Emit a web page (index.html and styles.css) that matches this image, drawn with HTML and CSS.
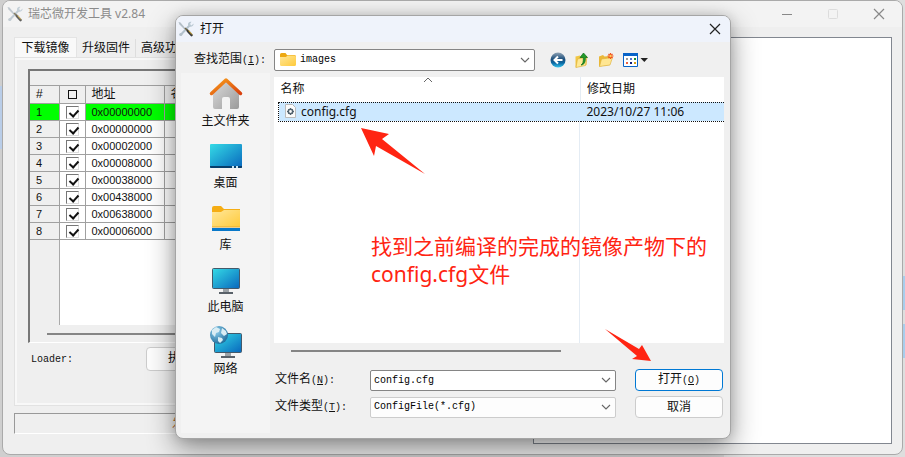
FILE: index.html
```html
<!DOCTYPE html>
<html lang="zh-CN">
<head>
<meta charset="utf-8">
<title>瑞芯微开发工具 v2.84</title>
<link rel="stylesheet" href="styles.css">
</head>
<body>
<svg class="defs" aria-hidden="true">
  <defs>
    <linearGradient id="screen" x1="0" y1="0" x2="1" y2="1"><stop offset="0" stop-color="#35dbe6"/><stop offset="1" stop-color="#0867bd"/></linearGradient>
    <linearGradient id="folder" x1="0" y1="0" x2="1" y2="1"><stop offset="0" stop-color="#ffe79a"/><stop offset="1" stop-color="#ffca3a"/></linearGradient>
    <linearGradient id="roof" x1="0" y1="0" x2="1" y2="1"><stop offset="0" stop-color="#f9a01b"/><stop offset="1" stop-color="#d8400e"/></linearGradient>
    <linearGradient id="wall" x1="0" y1="0" x2="1" y2="1"><stop offset="0" stop-color="#dcdcdc"/><stop offset="1" stop-color="#9b9b9b"/></linearGradient>
    <radialGradient id="globe" cx=".35" cy=".3" r=".8"><stop offset="0" stop-color="#8fd0ee"/><stop offset="1" stop-color="#176494"/></radialGradient>
    <linearGradient id="back" x1="0" y1="0" x2="0" y2="1"><stop offset="0" stop-color="#8fa2b4"/><stop offset=".45" stop-color="#1c4f7c"/><stop offset=".7" stop-color="#0a6aa5"/><stop offset="1" stop-color="#35c4ec"/></linearGradient>
  </defs>
  <symbol id="tools" viewBox="0 0 16 16">
    <path d="M3 13.500 12 4" stroke="#b3c2cd" stroke-width="2"/>
    <path d="M15.500 2.500 13.500 4.500 12 3 13.500.8c-2-.6-4 1-3.500 3.200l1.500 1.700c2.500.5 4.500-1.200 4-3.200Z" fill="#b9c8d2"/>
    <path d="m.5 1 2 .5 5 6-1 1L1.500 3.500Z" fill="#b3bec6"/>
    <path d="m7 7 3 3" stroke="#6b6242" stroke-width="1.600"/>
    <path d="m9.800 9.800 3.700 4.200" stroke="#3a3a38" stroke-width="2.600" stroke-linecap="round"/>
    <path d="m10.500 9.500 3.500 4" stroke="#e4b83c" stroke-width="1"/>
    <circle cx="2.800" cy="13.500" r="1.600" fill="#b4c1ca"/>
  </symbol>
  <symbol id="chevron" viewBox="0 0 10 6"><path d="m1 1 4 4 4-4" fill="none" stroke="#666" stroke-width="1.100"/></symbol>
  <symbol id="folder-icon" viewBox="0 0 16 13"><path d="M0 1.500Q0 0 1.500 0h4L7 2h7.500Q16 2 16 3.500V6H0Z" fill="#eda811"/><path d="M0 4h6l1.500-1.500h7Q16 2.500 16 4v7.500q0 1.500-1.500 1.500h-13Q0 13 0 11.500Z" fill="url(#folder)"/></symbol>
</svg>

<main class="window">
  <header class="titlebar">
    <svg class="app-icon faded"><use href="#tools"/></svg>
    <h1>瑞芯微开发工具 v2.84</h1>
    <div class="caption-buttons">
      <button aria-label="最小化"><svg viewBox="0 0 12 12"><path d="M1 6.500h10" stroke="#888"/></svg></button>
      <button aria-label="最大化" disabled><svg viewBox="0 0 12 12"><rect x="1.500" y="1.500" width="9" height="9" rx="1" fill="none" stroke="#dcdcdc"/></svg></button>
      <button aria-label="关闭"><svg viewBox="0 0 12 12"><path d="m1 1 10 10M11 1 1 11" stroke="#888" stroke-width="1.200"/></svg></button>
    </div>
  </header>
  <div class="content">
    <section class="left">
      <nav class="tabs">
        <button class="tab active">下载镜像</button><button class="tab">升级固件</button><button class="tab">高级功能</button>
      </nav>
      <div class="panel">
        <div class="grid-frame">
          <table class="grid">
            <colgroup><col class="c-num"><col class="c-check"><col class="c-addr"><col></colgroup>
            <thead><tr><th>#</th><th><span class="box"></span></th><th>地址</th><th>名字</th></tr></thead>
            <tbody>
              <tr class="current"><td>1</td><td><input type="checkbox" checked aria-label="1"></td><td>0x00000000</td><td></td></tr>
              <tr><td>2</td><td><input type="checkbox" checked aria-label="2"></td><td>0x00000000</td><td></td></tr>
              <tr><td>3</td><td><input type="checkbox" checked aria-label="3"></td><td>0x00002000</td><td></td></tr>
              <tr><td>4</td><td><input type="checkbox" checked aria-label="4"></td><td>0x00008000</td><td></td></tr>
              <tr><td>5</td><td><input type="checkbox" checked aria-label="5"></td><td>0x00038000</td><td></td></tr>
              <tr><td>6</td><td><input type="checkbox" checked aria-label="6"></td><td>0x00438000</td><td></td></tr>
              <tr><td>7</td><td><input type="checkbox" checked aria-label="7"></td><td>0x00638000</td><td></td></tr>
              <tr><td>8</td><td><input type="checkbox" checked aria-label="8"></td><td>0x00006000</td><td></td></tr>
            </tbody>
          </table>
          <div class="grid-rest"></div>
          <div class="grid-scroll"><i></i></div>
        </div>
        <div class="loader"><span>Loader:</span><button>执行</button></div>
      </div>
      <div class="status">发现一个设备</div>
    </section>
    <section class="log" aria-label="日志"></section>
  </div>
</main>

<div class="dialog" role="dialog" aria-labelledby="dialog-title">
  <header class="dialog-title">
    <svg class="app-icon"><use href="#tools"/></svg>
    <h2 id="dialog-title">打开</h2>
    <button aria-label="关闭"><svg viewBox="0 0 12 12"><path d="m1 1 10 10M11 1 1 11" stroke="#222" stroke-width="1.200"/></svg></button>
  </header>
  <div class="lookup">
    <label for="look-in">查找范围<span>(<u>I</u>):</span></label>
    <div class="combo strong">
      <svg class="combo-icon"><use href="#folder-icon"/></svg>
      <select id="look-in"><option>images</option></select>
      <svg class="arrow"><use href="#chevron"/></svg>
    </div>
    <div class="tools">
      <button aria-label="后退"><svg viewBox="0 0 16 16"><circle cx="8" cy="8" r="7.500" fill="url(#back)"/><path d="M12.500 8H4.500M8 4.500 4.500 8 8 11.500" fill="none" stroke="#fff" stroke-width="2"/></svg></button>
      <button aria-label="向上一级"><svg viewBox="0 0 16 16"><path d="M1.500 4.500 6 3.500l1 1.500 6-1-.500 9-11 2.500Z" fill="#f2c744"/><path d="m3.500 7 9.500-2-1.500 8.500-9.500 2Z" fill="#ffe994" stroke="#dcae35" stroke-width=".6"/><path d="M7 13c2-1 2.500-3 2.300-7.500H6L9.500 1l4 4.500h-2.200c.4 4.500-1.300 7.500-4.300 7.500Z" fill="#229b29" stroke="#0c6c17" stroke-width=".7"/></svg></button>
      <button aria-label="新建文件夹"><svg viewBox="0 0 16 16"><path d="M1 4.500 5 3l1.500 1.500L12 4v9L1 14.500Z" fill="#eab838"/><path d="m3.500 7 11-1.500L12 13 1.500 14.500Z" fill="#ffe692" stroke="#dcae35" stroke-width=".6"/><path d="M12.500 1v6M9.500 4h6M10.500 2l4 4M14.500 2l-4 4" stroke="#f0511e" stroke-width="1.200"/><circle cx="12.500" cy="4" r="1.200" fill="#ffd05a"/></svg></button>
      <button class="view" aria-label="视图"><svg viewBox="0 0 26 16"><path d="M1 1h15v14H1Z" fill="#fff"/><path d="M1.500 1.500h14v13h-14Z" fill="none" stroke="#0863c8"/><path d="M1 1h15v3H1Z" fill="#0863c8"/><path d="M4 6h2v2H4z" fill="#999"/><path d="M8 6h2v2H8z" fill="#5372cc"/><path d="M12 6h2v2h-2z" fill="#138b37"/><path d="M4 10h2v2H4z" fill="#ec6242"/><path d="M8 10h2v2H8z" fill="#101e7c"/><path d="M12 10h2v2h-2z" fill="#d89e11"/><path d="M18.500 6h7.500l-3.700 4Z" fill="#222"/></svg></button>
    </div>
  </div>
  <div class="dialog-body">
    <nav class="places">
      <a href="#home"><svg viewBox="0 0 34 34"><path d="M4 15 17 3l13 12v15q0 2-2 2h-7V22q0-2-2-2h-4q-2 0-2 2v10H6q-2 0-2-2Z" fill="url(#wall)"/><path d="M2.500 16.500 17 3l14.500 13.500" fill="none" stroke="url(#roof)" stroke-width="3.500" stroke-linecap="round" stroke-linejoin="round"/></svg>主文件夹</a>
      <a href="#desktop"><svg viewBox="0 0 34 34"><rect x="1" y="5" width="32" height="24" rx="1" fill="url(#screen)"/><path d="M1 27h32v1q0 1-1 1H2q-1 0-1-1Z" fill="#073e6b"/><path d="M23 28h2M27 28h2" stroke="#c9e8f5" stroke-width="2"/></svg>桌面</a>
      <a href="#library"><svg viewBox="0 0 34 34"><path d="M3 7q0-2 2-2h7l3 3h16v5H3Z" fill="#f5ad14"/><path d="M3 11h9l3-2h16v17H3Z" fill="url(#folder)"/><path d="M3 26h28" stroke="#e1a830"/><path d="M3 27h28v3H3Z" fill="#0878c9"/></svg>库</a>
      <a href="#computer"><svg viewBox="0 0 34 34"><path d="M14 25h6v4h-6Z" fill="#9da3a8"/><path d="M10 29h14v2H10Z" fill="#596169"/><rect x="3.500" y="5.500" width="27" height="20" rx="1" fill="url(#screen)" stroke="#44596a"/></svg>此电脑</a>
      <a href="#network"><svg viewBox="0 0 34 34"><path d="M16 28h6v3h-6Z" fill="#9da3a8"/><path d="M12 31h14v2H12Z" fill="#596169"/><rect x="5.500" y="8.500" width="27" height="19" rx="1" fill="url(#screen)" stroke="#44596a"/><circle cx="10" cy="10" r="9" fill="url(#globe)"/><path d="m3 5 4-3 4 2-1 3-3 1-1 4-3-3ZM13 3l4 3 1 3-3 2-3-3ZM9 12l4 1 1 2-3 3-2-2Z" fill="#d9edf4"/></svg>网络</a>
    </nav>
    <div class="files">
      <div class="list">
        <svg class="sort" viewBox="0 0 10 6"><path d="m1 5 4-4 4 4" fill="none" stroke="#666"/></svg>
        <table>
          <colgroup><col class="c-name"><col></colgroup>
          <thead><tr><th>名称</th><th>修改日期</th></tr></thead>
          <tbody><tr><td><svg viewBox="0 0 11 14"><path d="M.5.5h7L10.500 3.500v10H.5Z" fill="#fafafa" stroke="#bbb"/><circle cx="5.500" cy="7.500" r="2.200" fill="none" stroke="#53636f" stroke-width="1.600"/><path d="M5.500 4v1M5.500 10v1M2 7.500h1M8 7.500h1M3 5l.7.7M7.300 9.300l.7.7M8 5l-.7.7M3.700 9.300 3 10" stroke="#53636f"/></svg>config.cfg</td><td>2023/10/27 11:06</td></tr></tbody>
        </table>
        <div class="list-rest"></div>
      </div>
      <div class="list-scroll"><i></i></div>
      <div class="form">
        <label for="file-name">文件名<span>(<u>N</u>):</span></label>
        <div class="combo strong"><input id="file-name" type="text" value="config.cfg"><svg class="arrow"><use href="#chevron"/></svg></div>
        <button class="default">打开<span>(<u>O</u>)</span></button>
        <label for="file-type">文件类型<span>(<u>T</u>):</span></label>
        <div class="combo"><select id="file-type"><option>ConfigFile(*.cfg)</option></select><svg class="arrow"><use href="#chevron"/></svg></div>
        <button>取消</button>
      </div>
    </div>
  </div>
  <p class="note">找到之前编译的完成的镜像产物下的<br>config.cfg文件</p>
  <svg class="pointer to-file" viewBox="0 0 64 47"><path d="m0 0 28 6-7 5 43 35-49-28-2 10Z" fill="#ff2412"/></svg>
  <svg class="pointer to-open" viewBox="0 0 46 33"><path d="m46 32-19-2 5-3L0 0l34 20 3-4Z" fill="#ff2412"/></svg>
</div>
</body>
</html>
```
FILE: styles.css
```css
* { box-sizing: border-box; }
html { height: 100%; overflow: hidden; }
body {
  margin: 0;
  height: 100%;
  padding: 0 2px 2px;
  overflow: hidden;
  background:
    linear-gradient(#a9cdec, #a9cdec) right 0 top 276px / 3px 34px no-repeat,
    linear-gradient(#a9cdec, #a9cdec) right 0 top 324px / 3px 34px no-repeat,
    linear-gradient(#b9cde8, #b9cde8) left 0 top 86px / 3px 63px no-repeat,
    linear-gradient(90deg, #cfcfcf 80%, #dedede 80%);
  font: 12px/16px "Noto Sans", "Noto Sans CJK SC", sans-serif;
  color: #111;
}
button, input, select { font: inherit; color: inherit; margin: 0; padding: 0; border: 0; background: none; }
table { border-collapse: collapse; table-layout: fixed; width: 100%; }
th { font-weight: normal; text-align: left; }
th, td { padding: 0; }
svg { display: block; flex: none; }
.defs { position: absolute; width: 0; height: 0; }

.window {
  display: flex;
  flex-direction: column;
  height: 100%;
  border: 1px solid #aaa;
  border-radius: 8px;
  background: #efefef;
  overflow: hidden;
}
.titlebar { display: flex; align-items: center; height: 26px; flex: none; padding-left: 4px; background: #f3f3f3; color: #8b8b8b; }
.app-icon { width: 16px; height: 16px; }
.faded { opacity: .8; }
h1, h2 { margin: 0; font-size: 12px; font-weight: normal; }
.titlebar h1 { flex: 1; padding-left: 5px; }
.caption-buttons { display: flex; }
.caption-buttons button { display: grid; place-items: center; width: 46px; height: 26px; }
.caption-buttons svg, .dialog-title button svg { width: 12px; height: 12px; }

.content { display: flex; flex: 1; gap: 10px; padding: 10px 10px 10px 11px; }
.left { display: flex; flex-direction: column; flex: 1; padding-bottom: 10px; }
.tabs { display: flex; align-items: flex-end; height: 20px; flex: none; }
.tab { width: 59px; height: 18px; line-height: 18px; border-right: 1px solid #ddd; white-space: nowrap; }
.tab.active { width: 63px; height: 20px; background: #f9f9f9; border: 1px solid #e4e4e4; border-bottom: 0; }
.panel { flex: 1; padding: 9px 11px; border: 3px solid #f8f8f8; outline: 1px solid #e2e2e2; outline-offset: -1px; }
.grid-frame { display: flex; flex-direction: column; height: 274px; border-top: 2px solid #777; border-left: 2px solid #777; border-bottom: 1px solid #fff; background: #efefef; padding-top: 14px; }
.grid { font: 11px/14px "Liberation Sans", "Noto Sans CJK SC", sans-serif; }
.c-num { width: 29px; }
.c-check { width: 26px; }
.c-addr { width: 79px; }
.grid th { height: 18px; padding-left: 6px; font-size: 12px; line-height: 17px; border: solid #a0a0a0; border-width: 1px 1px 1px 0; }
.grid td { height: 17px; padding-left: 6px; background: #fff; border-right: 1px solid #a0a0a0; border-bottom: 1px solid #a0a0a0; }
.grid tbody td:first-child { background: #efefef; }
.grid tbody .current td, .grid tbody .current td:first-child { background: #0f0; }
.grid tbody .current td:nth-child(2) { background: #fff; }
.box { display: block; width: 9px; height: 9px; margin-left: 2px; border: 1px solid #111; }
.grid input { appearance: none; display: block; width: 13px; height: 13px; border: 1px solid; border-color: #777 #ddd #ddd #777; background: #fff; }
.grid input:checked::before { content: ""; display: block; width: 4px; height: 7px; margin: 1px 0 0 4px; border: solid #111; border-width: 0 2px 2px 0; transform: rotate(42deg); }
.grid-rest { flex: 1; margin-left: 29px; border-left: 1px solid #aaa; background: #fff; }
.grid-scroll { height: 17px; padding: 8px 17px 7px; }
.grid-scroll i, .list-scroll i { display: block; height: 2px; background: #858585; }
.loader { display: flex; align-items: center; height: 24px; margin-top: 4px; padding-left: 3px; font-family: "Liberation Mono", "Noto Sans CJK SC", monospace; font-size: 10px; }
.loader span { width: 115px; padding-top: 2px; }
.loader button { width: 88px; height: 24px; padding-left: 21px; text-align: left; border: 1px solid #ccc; border-radius: 4px; background: #fdfdfd; font-size: 12px; }
.status { height: 21px; margin-top: 7px; padding-left: 157px; border: 1px solid #fff; border-top-color: #999; border-left-color: #999; color: #b36a25; line-height: 19px; flex: none; }
.log { width: 359px; border: 1px solid #828790; background: #fff; }

.dialog {
  position: absolute;
  left: 175px;
  top: 15px;
  width: 556px;
  border: 1px solid #a5a5a5;
  border-radius: 8px;
  background: #f0f0f0;
  box-shadow: 0 10px 28px rgba(0, 0, 0, .42), 0 0 12px rgba(0, 0, 0, .12);
}
.dialog-title { display: flex; align-items: center; height: 26px; padding: 0 8px 0 2px; border-radius: 7px 7px 0 0; background: #eff3fb; }
.dialog-title h2 { flex: 1; padding-left: 6px; }
.dialog-title button { display: grid; place-items: center; width: 14px; height: 14px; }
.lookup { display: flex; align-items: center; height: 35px; padding: 0 82px 0 18px; }
.lookup label, .form label { white-space: nowrap; }
label span, .default span { font: 10px/16px "Liberation Mono", monospace; }
.lookup label { width: 80px; }
.combo { display: flex; align-items: center; flex: 1; height: 22px; padding: 0 4px; border: 1px solid #ccc; border-radius: 2px; background: #fdfdfd; font: 10px/16px "Liberation Mono", monospace; color: #000; }
.combo.strong { border-color: #858585; background: #fff; }
.combo select, .combo input { appearance: none; flex: 1; min-width: 0; height: 18px; outline: 0; }
.combo-icon { width: 16px; height: 13px; margin: 0 4px 0 1px; }
.arrow { width: 10px; height: 6px; pointer-events: none; }
.tools { display: flex; flex: none; gap: 8px; margin-left: 15px; }
.tools svg { width: 16px; height: 16px; }
.tools .view svg { width: 26px; }

.dialog-body { display: flex; gap: 4px; padding: 0 6px 5px 5px; height: 361px; }
.places { display: flex; flex-direction: column; width: 89px; margin-top: -4px; padding-top: 4px; background: #f4f4f4; flex: none; }
.places a { display: flex; flex-direction: column; align-items: center; height: 62px; color: #111; text-decoration: none; }
.places svg { width: 34px; height: 34px; margin-bottom: 2px; }
.files { display: flex; flex-direction: column; flex: 1; min-width: 0; }
.list { position: relative; display: flex; flex-direction: column; height: 266px; padding-left: 4px; background: #fff; }
.sort { position: absolute; left: 149px; top: 0; width: 10px; height: 6px; }
.c-name { width: 302px; }
.list th { height: 25px; padding: 0 6px; border-right: 1px solid #e4ecf4; }
.list th:first-child { padding-left: 2px; }
.list td { height: 19px; padding: 0 6px; background: #cce8ff; border-top: 1px dotted #111; border-bottom: 1px dotted #111; line-height: 16px; }
.list td:first-child { padding-left: 6px; border-left: 1px dotted #111; }
.list th:last-child { border-right: 0; }
.list td svg { display: inline-block; width: 11px; height: 14px; margin-right: 5px; vertical-align: -2px; }
.list-rest { flex: 1; width: 302px; border-right: 1px solid #e4ecf4; }
.list-scroll { height: 26px; padding: 7px 163px 0 17px; flex: none; }
.form { display: grid; grid-template-columns: 96px 1fr 88px; grid-auto-rows: 22px; row-gap: 5px; align-items: center; padding-right: 1px; }
.form label { padding-left: 1px; }
.form .combo { height: 21px; margin-right: 19px; padding-left: 3px; }
.form > button { height: 22px; border: 1px solid #ccc; border-radius: 4px; background: #fdfdfd; }
.form > .default { border-color: #0078d4; }

.note { position: absolute; left: 195px; top: 216px; margin: 0; color: #ff2412; font: 21px/28px "Noto Sans", "Noto Sans CJK SC", sans-serif; white-space: nowrap; }
.pointer { position: absolute; }
.to-file { left: 185px; top: 112px; width: 64px; height: 47px; }
.to-open { left: 429px; top: 313px; width: 46px; height: 33px; }
```
